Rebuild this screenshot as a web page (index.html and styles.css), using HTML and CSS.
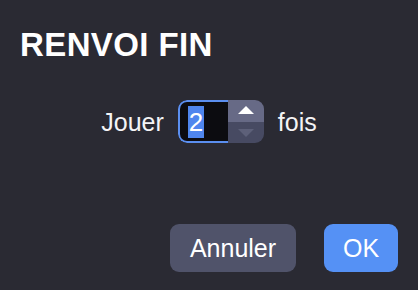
FILE: index.html
```html
<!DOCTYPE html>
<html lang="fr">
<head>
<meta charset="utf-8">
<title>Renvoi fin</title>
<link rel="stylesheet" href="styles.css">
</head>
<body>
<div class="dialog">
  <h1 class="title">RENVOI FIN</h1>
  <div class="row">
    <span class="label">Jouer</span>
    <div class="spin-input">
      <div class="field"><span class="sel">2</span></div>
      <div class="spinner">
        <div class="step up"><span class="tri-up"></span></div>
        <div class="step down"><span class="tri-down"></span></div>
      </div>
    </div>
    <span class="label">fois</span>
  </div>
  <div class="actions">
    <button class="btn btn-cancel">Annuler</button>
    <button class="btn btn-ok">OK</button>
  </div>
</div>
</body>
</html>
```
FILE: styles.css
```css
html, body {
  margin: 0;
  padding: 0;
  background: #2a2a33;
}
.dialog {
  height: 290px;
  box-sizing: border-box;
  display: flex;
  flex-direction: column;
  padding: 26px 20px 18px 20px;
  font-family: "Liberation Sans", Arial, sans-serif;
  color: #ffffff;
}
.title {
  margin: 0;
  font-size: 33px;
  font-weight: bold;
  line-height: 38px;
  letter-spacing: 0.4px;
  color: #ffffff;
}
.row {
  margin-top: 36px;
  display: flex;
  align-items: center;
  justify-content: center;
  gap: 14px;
  height: 43px;
  font-size: 25px;
}
.label {
  color: #f4f4f6;
  padding-top: 2px;
}
.spin-input {
  display: flex;
  width: 86px;
  height: 43px;
  border-radius: 9px;
  overflow: hidden;
}
.field {
  width: 50px;
  box-sizing: border-box;
  background: #0c0c10;
  border: 2px solid #5b8ff0;
  border-right: none;
  border-radius: 9px 0 0 9px;
  display: flex;
  align-items: center;
  padding-left: 8px;
}
.sel {
  background: #4f86ee;
  color: #ffffff;
  font-size: 26px;
  line-height: 32px;
  padding: 0 1px;
}
.spinner {
  width: 36px;
  display: flex;
  flex-direction: column;
}
.step {
  flex: 1;
  display: flex;
  align-items: center;
  justify-content: center;
}
.up {
  background: #676a86;
}
.down {
  background: #474a62;
}
.tri-up {
  width: 0;
  height: 0;
  border-left: 8px solid transparent;
  border-right: 8px solid transparent;
  border-bottom: 8px solid #ffffff;
  margin-top: -2px;
}
.tri-down {
  width: 0;
  height: 0;
  border-left: 8px solid transparent;
  border-right: 8px solid transparent;
  border-top: 8px solid #5d6079;
  margin-top: 2px;
}
.actions {
  margin-top: auto;
  display: flex;
  justify-content: flex-end;
  gap: 28px;
}
.btn {
  height: 48px;
  border: none;
  border-radius: 9px;
  font-family: "Liberation Sans", Arial, sans-serif;
  font-size: 25px;
  color: #ffffff;
  padding: 0;
}
.btn-cancel {
  width: 126px;
  background: #50536a;
}
.btn-ok {
  width: 74px;
  background: #5591f5;
}
```
